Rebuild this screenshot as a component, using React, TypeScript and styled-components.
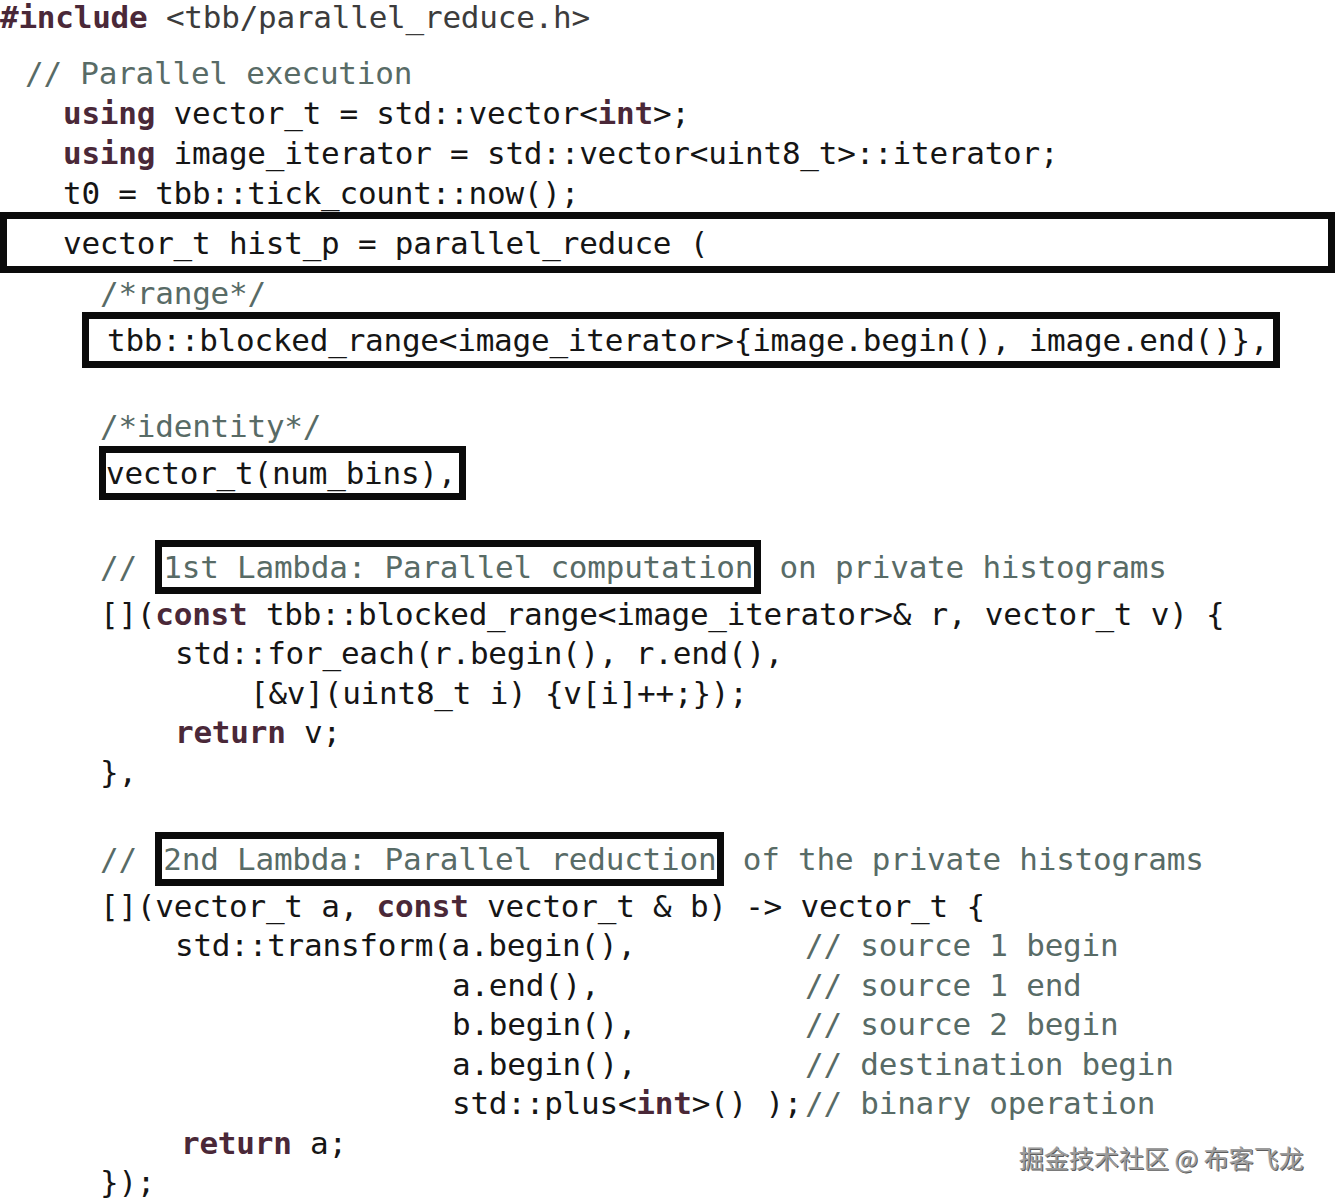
import React from "react";
import styled, { createGlobalStyle } from "styled-components";

const Global = createGlobalStyle`
  html, body { margin: 0; padding: 0; background: #ffffff; }
  #root { width: 1337px; }
`;

const Page = styled.div`
  position: relative;
  width: 1337px;
  height: 1200px;
  overflow: hidden;
  background: #ffffff;
  font-family: "DejaVu Sans Mono", "Liberation Mono", monospace;
  font-size: 31px;
  letter-spacing: -0.23px;
  color: #151515;
  display: flex;
  flex-direction: column;
`;

const Line = styled.div<{ $indent: number; $h?: number; $mt?: number }>`
  display: flex;
  align-items: center;
  white-space: pre;
  height: ${(p) => p.$h ?? 39.5}px;
  margin-top: ${(p) => p.$mt ?? 0}px;
  padding-left: ${(p) => p.$indent}px;
  flex-shrink: 0;
`;

const Box = styled.div<{ $left: number; $h: number; $pl: number; $pr: number; $full?: boolean }>`
  display: flex;
  align-items: center;
  white-space: pre;
  box-sizing: border-box;
  border: 7px solid #0b0b0b;
  height: ${(p) => p.$h}px;
  margin-left: ${(p) => p.$left}px;
  padding-left: ${(p) => p.$pl}px;
  padding-right: ${(p) => p.$pr}px;
  width: ${(p) => (p.$full ? "1335px" : "max-content")};
  flex-shrink: 0;
`;

const InlineBox = styled.span`
  display: inline-flex;
  align-items: center;
  box-sizing: border-box;
  height: 54px;
  border: 7px solid #0b0b0b;
  padding: 0 1px;
`;

const AnnotatedLine = styled.div`
  display: grid;
  grid-template-columns: 805px max-content;
  align-items: center;
  height: 39.5px;
  white-space: pre;
  flex-shrink: 0;
`;

const CodeCell = styled.span<{ $indent: number }>`
  padding-left: ${(p) => p.$indent}px;
`;

const K = styled.span`
  font-weight: bold;
  color: #4a2838;
`;

const C = styled.span`
  color: #586b66;
`;

const T = styled.span<{ $muted?: boolean }>`
  white-space: pre;
  color: ${(p) => (p.$muted ? "#3c3c3c" : "inherit")};
`;

const Watermark = styled.div`
  position: absolute;
  left: 1019px;
  top: 1139px;
  font-family: "Noto Sans CJK SC", "Noto Sans", sans-serif;
  font-size: 25px;
  letter-spacing: 0;
  color: #9c9c9c;
  text-shadow: 1px 1px 0 #5c5c5c, -0.5px -0.5px 0 #e8e8e8;
  white-space: pre;
`;

export default function App() {
  return (
    <>
      <Global />
      <Page>
        <Line $indent={0} $h={34}>
          <K>#include</K>
          <T $muted>{" <tbb/parallel_reduce.h>"}</T>
        </Line>
        <Line $indent={25} $h={40} $mt={19}>
          <C>// Parallel execution</C>
        </Line>
        <Line $indent={63} $h={40}>
          <K>using</K>
          <T>{" vector_t = std::vector<"}</T>
          <K>int</K>
          <T>{">;"}</T>
        </Line>
        <Line $indent={63} $h={40}>
          <K>using</K>
          <T>{" image_iterator = std::vector<uint8_t>::iterator;"}</T>
        </Line>
        <Line $indent={63} $h={39}>
          <T>t0 = tbb::tick_count::now();</T>
        </Line>
        <Box $left={0} $h={61} $pl={56} $pr={0} $full>
          <T>vector_t hist_p = parallel_reduce (</T>
        </Box>
        <Line $indent={100} $h={39}>
          <C>/*range*/</C>
        </Line>
        <Box $left={82} $h={56} $pl={18} $pr={5}>
          <T>{"tbb::blocked_range<image_iterator>{image.begin(), image.end()},"}</T>
        </Box>
        <Line $indent={100} $h={40} $mt={38}>
          <C>/*identity*/</C>
        </Line>
        <Box $left={99} $h={54} $pl={0} $pr={3}>
          <T>vector_t(num_bins),</T>
        </Box>
        <Line $indent={100} $h={54} $mt={40}>
          <C>{"// "}</C>
          <InlineBox>
            <C>1st Lambda: Parallel computation</C>
          </InlineBox>
          <C>{" on private histograms"}</C>
        </Line>
        <Line $indent={100}>
          <T>{"[]("}</T>
          <K>const</K>
          <T>{" tbb::blocked_range<image_iterator>& r, vector_t v) {"}</T>
        </Line>
        <Line $indent={175}>
          <T>std::for_each(r.begin(), r.end(),</T>
        </Line>
        <Line $indent={250}>
          <T>{"[&v](uint8_t i) {v[i]++;});"}</T>
        </Line>
        <Line $indent={175}>
          <K>return</K>
          <T>{" v;"}</T>
        </Line>
        <Line $indent={100}>
          <T>{"},"}</T>
        </Line>
        <Line $indent={100} $h={54} $mt={40.5}>
          <C>{"// "}</C>
          <InlineBox>
            <C>2nd Lambda: Parallel reduction</C>
          </InlineBox>
          <C>{" of the private histograms"}</C>
        </Line>
        <Line $indent={100}>
          <T>{"[](vector_t a, "}</T>
          <K>const</K>
          <T>{" vector_t & b) -> vector_t {"}</T>
        </Line>
        <AnnotatedLine>
          <CodeCell $indent={175}>std::transform(a.begin(),</CodeCell>
          <C>// source 1 begin</C>
        </AnnotatedLine>
        <AnnotatedLine>
          <CodeCell $indent={452}>a.end(),</CodeCell>
          <C>// source 1 end</C>
        </AnnotatedLine>
        <AnnotatedLine>
          <CodeCell $indent={452}>b.begin(),</CodeCell>
          <C>// source 2 begin</C>
        </AnnotatedLine>
        <AnnotatedLine>
          <CodeCell $indent={452}>a.begin(),</CodeCell>
          <C>// destination begin</C>
        </AnnotatedLine>
        <AnnotatedLine>
          <CodeCell $indent={452}>
            {"std::plus<"}
            <K>int</K>
            {">() );"}
          </CodeCell>
          <C>// binary operation</C>
        </AnnotatedLine>
        <Line $indent={181}>
          <K>return</K>
          <T>{" a;"}</T>
        </Line>
        <Line $indent={100}>
          <T>{"});"}</T>
        </Line>
        <Watermark>掘金技术社区 @ 布客飞龙</Watermark>
      </Page>
    </>
  );
}
